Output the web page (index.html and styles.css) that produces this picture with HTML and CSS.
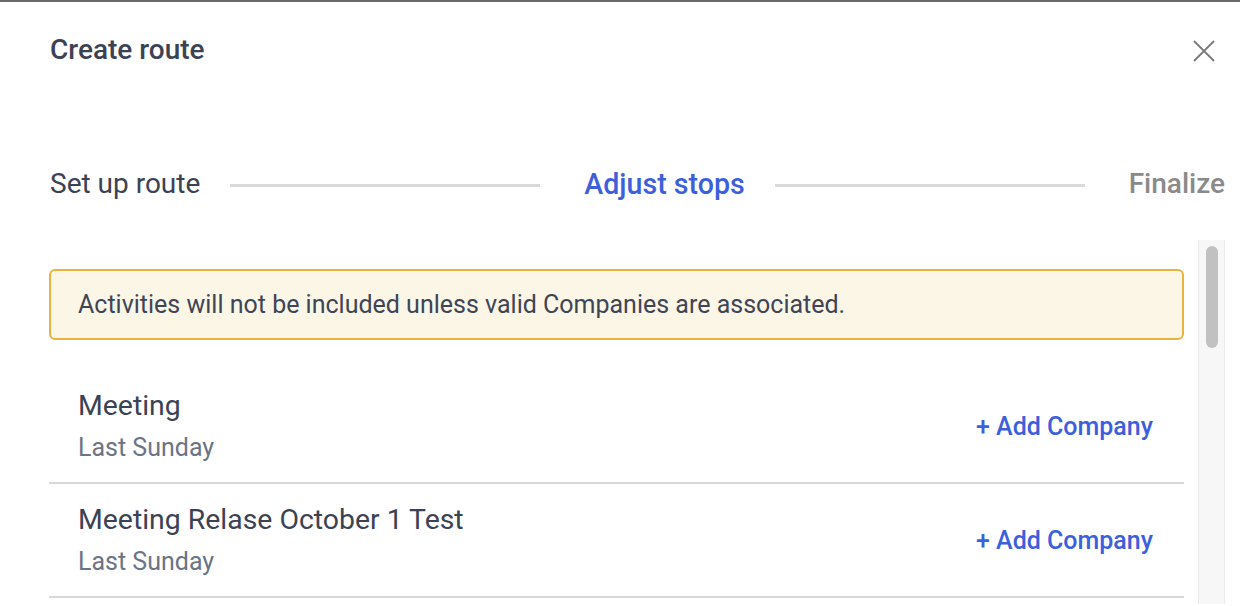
FILE: index.html
```html
<!DOCTYPE html>
<html>
<head>
<meta charset="utf-8">
<link rel="stylesheet" href="styles.css">
</head>
<body>
<div class="modal">
  <header class="header">
    <h1 class="title">Create route</h1>
    <button class="close" aria-label="Close">
      <svg width="24" height="24" viewBox="0 0 24 24"><path d="M2 2 L22 22 M22 2 L2 22" stroke="#7a7a7a" stroke-width="1.8" fill="none"/></svg>
    </button>
  </header>
  <nav class="stepper">
    <span class="step done">Set up route</span>
    <span class="line"></span>
    <span class="step active">Adjust stops</span>
    <span class="line"></span>
    <span class="step todo">Finalize</span>
  </nav>
  <div class="body">
    <div class="list">
      <div class="alert">Activities will not be included unless valid Companies are associated.</div>
      <div class="row">
        <div class="info">
          <div class="name">Meeting</div>
          <div class="date">Last Sunday</div>
        </div>
        <a class="add">+ Add Company</a>
      </div>
      <div class="row">
        <div class="info">
          <div class="name">Meeting Relase October 1 Test</div>
          <div class="date">Last Sunday</div>
        </div>
        <a class="add">+ Add Company</a>
      </div>
    </div>
    <div class="scrollbar"><div class="thumb"></div></div>
  </div>
</div>
</body>
</html>
```
FILE: styles.css
```css
* { box-sizing: border-box; }
html, body { margin: 0; padding: 0; background: #fff; }
body { font-family: Roboto, "Liberation Sans", sans-serif; height: 606px; overflow: hidden; }
.modal { border-top: 2px solid #6a6a6a; }
.header { display: flex; align-items: center; justify-content: space-between; padding: 32px 24px 0 50px; height: 64px; }
.title { margin: 0; font-size: 28px; font-weight: 500; line-height: 32px; color: #3b4254; }
.close { background: none; border: 0; padding: 0; width: 24px; height: 24px; margin-top: 2px; }
.stepper { display: flex; align-items: center; padding: 0 15px 0 50px; margin-top: 102px; height: 32px; }
.step { font-size: 28px; line-height: 32px; white-space: nowrap; }
.done { color: #3b4254; }
.active { color: #3d5fdc; font-weight: 500; font-size: 28.6px; }
.todo { color: #8a8a8a; font-weight: 500; }
.line { flex: 1; height: 3px; background: #dadada; margin: 2px 44px 0 30px; }
.body { display: flex; margin-top: 40px; padding-left: 49px; height: 364px; }
.list { width: 1135px; padding-top: 29px; }
.alert { height: 71px; border: 2px solid #ebb23f; background: #fcf6e7; border-radius: 6px; padding: 0 27px; display: flex; align-items: center; font-size: 25px; color: #3d4556; margin-bottom: 30px; }
.row { display: flex; align-items: center; justify-content: space-between; padding: 20px 31px 20px 29px; border-bottom: 2px solid #d8d8d8; }
.name { font-size: 28.4px; line-height: 32px; color: #3b4254; }
.date { font-size: 25px; line-height: 28px; color: #6b7484; margin-top: 12px; }
.add { font-size: 25px; font-weight: 500; color: #3d5fdc; }
.scrollbar { width: 27px; margin-left: 14px; background: #f7f7f7; border-left: 1px solid #ececec; border-right: 1px solid #ececec; padding: 6px 6px 0 7px; }
.thumb { height: 102px; background: #c1c1c1; border-radius: 7px; }
```
